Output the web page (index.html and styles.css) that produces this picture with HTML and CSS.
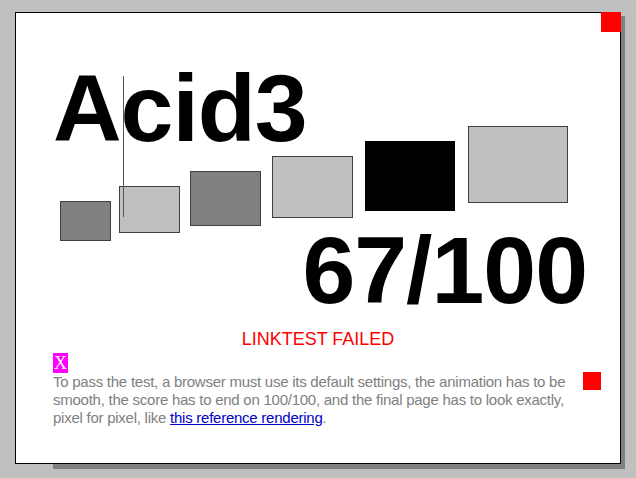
FILE: index.html
```html
<!DOCTYPE html>
<html>
<head>
    <title>The Acid3 Test</title>
    <link rel="stylesheet" href="styles.css">
</head>
<body>
    <div class="frame">
        <div class="page">
            <div class="corner"></div>
            <div class="rule"></div>
            <h1 class="title">Acid3</h1>
            <div class="buckets">
                <div class="bucket sq1"></div>
                <div class="bucket sq2"></div>
                <div class="bucket sq3"></div>
                <div class="bucket sq4"></div>
                <div class="bucket sq5"></div>
                <div class="bucket sq6"></div>
            </div>
            <div class="score">67/100</div>
            <div class="status">LINKTEST FAILED</div>
            <div class="marker"><span>X</span></div>
            <p class="note"><span class="flag"></span>To pass the test, a browser must use its default settings, the animation has to be smooth, the score has to end on 100/100, and the final page has to look exactly, pixel for pixel, like <a href="#">this reference rendering</a>.</p>
        </div>
    </div>
</body>
</html>
```

FILE: styles.css
```css
html {
    background: silver;
}
body {
    margin: 12px 0 0 15px;
    font-family: "Liberation Sans", Arial, sans-serif;
    color: black;
}
/* grey drop shadow behind the page, cut away top-right and bottom-left */
.frame {
    width: 610px;
    padding: 0 4px 5px 0;
    box-sizing: border-box;
    background:
        linear-gradient(silver, silver) right top / 4px 4px no-repeat,
        linear-gradient(silver, silver) left bottom / 38px 5px no-repeat,
        #808080;
}
.page {
    position: relative;
    box-sizing: border-box;
    width: 606px;
    height: 452px;
    padding: 48px 37px 0;
    background: white;
    border: 1px solid black;
}
.corner {
    position: absolute;
    top: -1px;
    right: -1px;
    width: 20px;
    height: 20px;
    background: red;
}
.rule {
    position: absolute;
    left: 107px;
    top: 63px;
    width: 1px;
    height: 141px;
    background: #555;
}
.title {
    margin: 0;
    font: bold 95px/95px "Liberation Sans", Arial, sans-serif;
    letter-spacing: -1px;
}
.buckets {
    display: flex;
    align-items: flex-end;
    margin-top: -30px;
}
.bucket {
    box-sizing: border-box;
    border: 1px solid #404040;
}
.sq1 { width: 51px; height: 40px; margin-left: 7px; background: gray; }
.sq2 { width: 61px; height: 47px; margin-left: 8px; margin-bottom: 8px; background: silver; }
.sq3 { width: 71px; height: 55px; margin-left: 10px; margin-bottom: 15px; background: gray; }
.sq4 { width: 81px; height: 62px; margin-left: 11px; margin-bottom: 23px; background: silver; }
.sq5 { width: 90px; height: 70px; margin-left: 12px; margin-bottom: 30px; background: black; border-color: black; }
.sq6 { width: 100px; height: 77px; margin-left: 13px; margin-bottom: 38px; background: silver; }
.score {
    margin: -18px -4px 0 0;
    text-align: right;
    font: bold 95px/95px "Liberation Sans", Arial, sans-serif;
    letter-spacing: -1px;
}
.status {
    margin-top: 11px;
    text-align: center;
    color: red;
    font-size: 18px;
    line-height: 20px;
}
.marker {
    margin-top: 4px;
    font: 18px/20px "Liberation Serif", "Times New Roman", serif;
}
.marker span {
    padding: 0 1px;
    background: fuchsia;
    color: white;
}
.note {
    margin: 0;
    color: gray;
    font-size: 15px;
    line-height: 18px;
    letter-spacing: -0.25px;
}
.note a {
    color: #0000cc;
}
.flag {
    float: right;
    width: 18px;
    height: 18px;
    margin: -1px -18px 0 0;
    background: red;
}
```
